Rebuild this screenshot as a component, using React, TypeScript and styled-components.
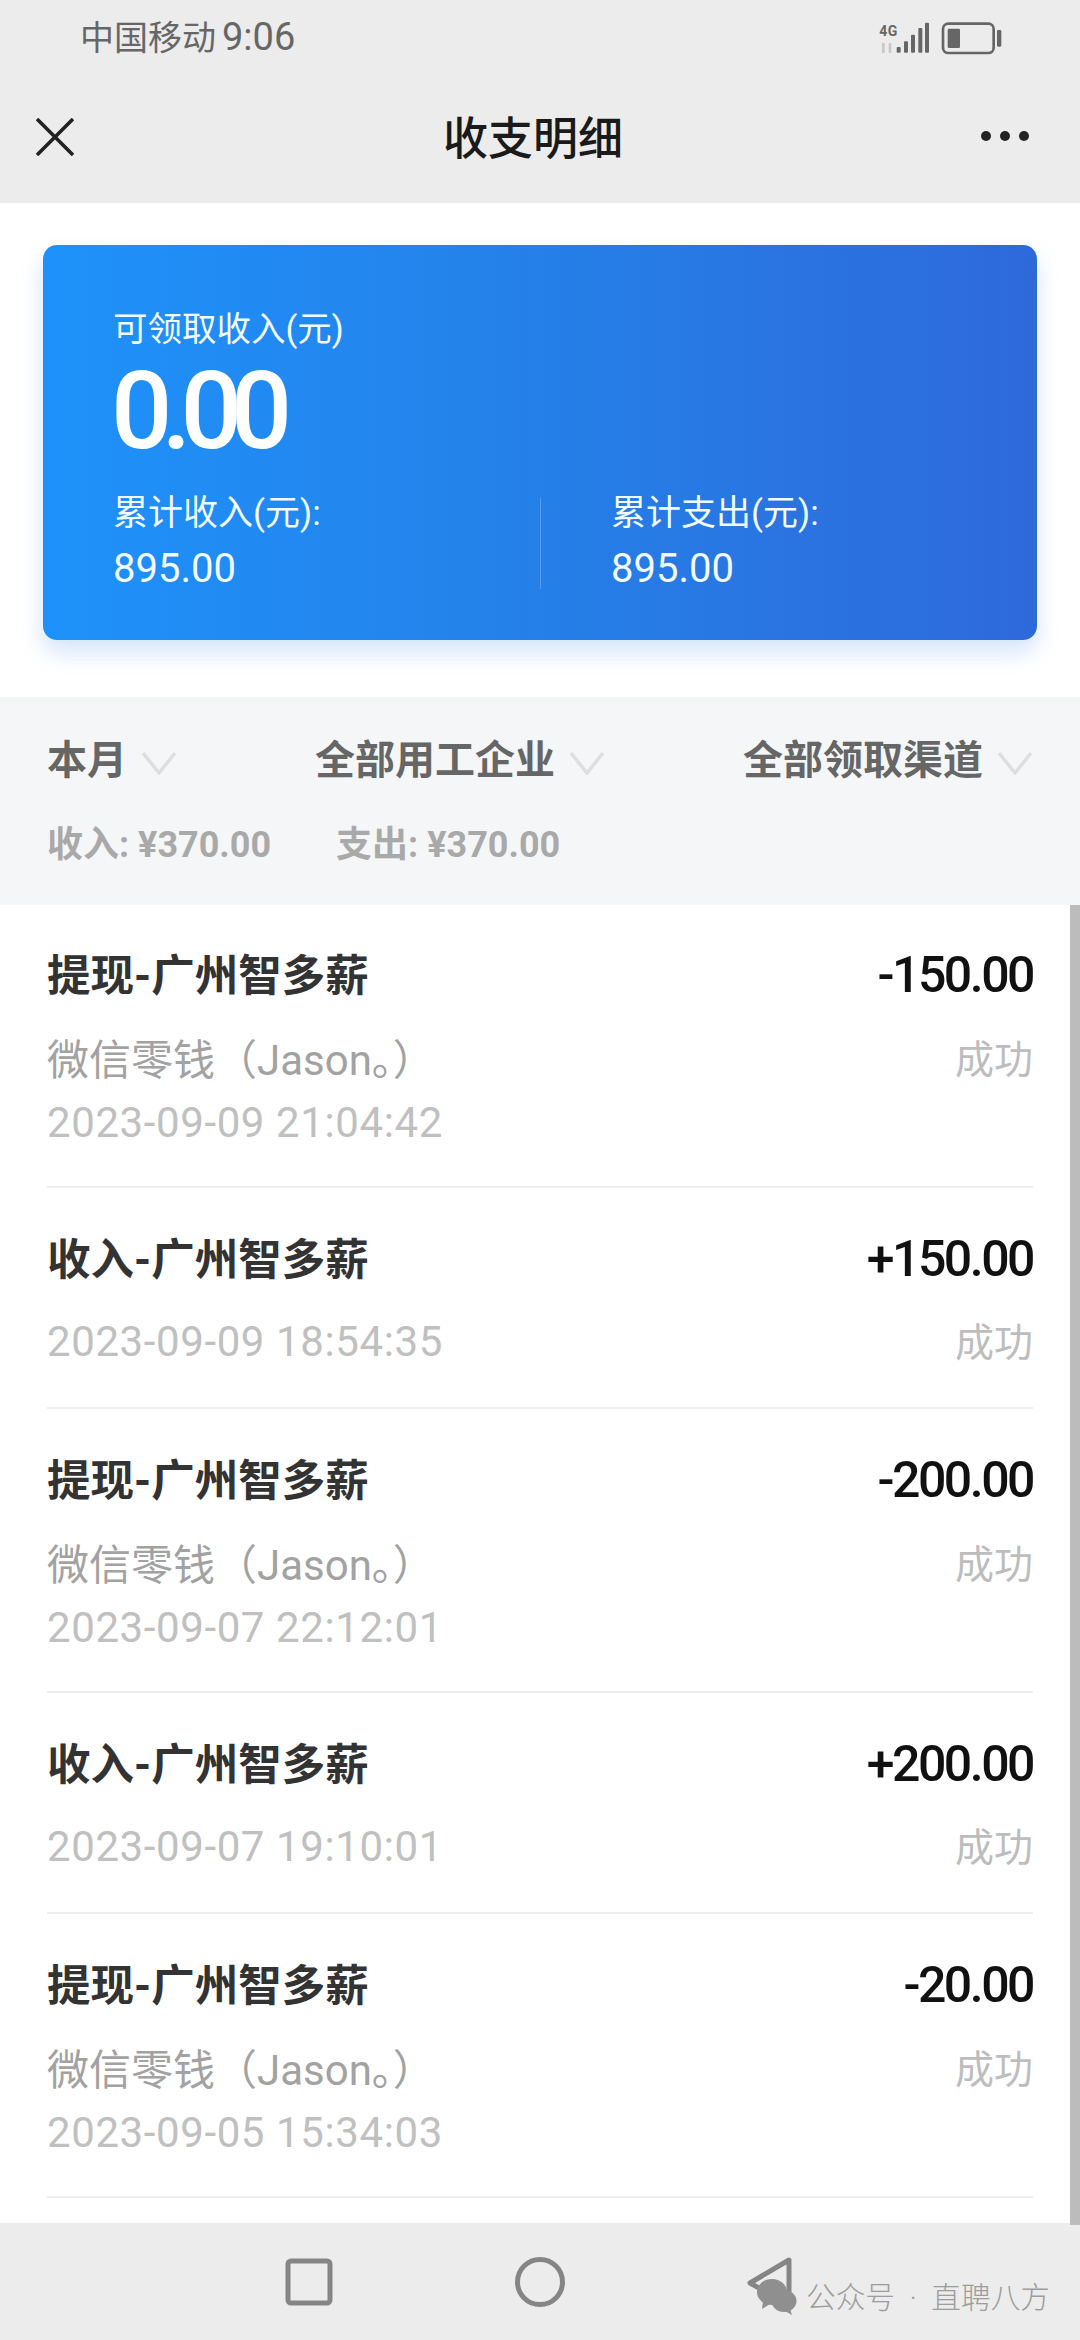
import React from "react";
import styled, { createGlobalStyle } from "styled-components";

const Global = createGlobalStyle`
  html, body { margin: 0; padding: 0; background: #fff; }
  * { box-sizing: border-box; }
  body { font-family: Roboto, "Noto Sans CJK SC", sans-serif; }
`;

const Page = styled.div`
  position: relative;
  width: 1080px;
  height: 2340px;
  overflow: hidden;
  display: flex;
  flex-direction: column;
  background: #fff;
`;

const Header = styled.header`
  height: 203px;
  flex: none;
  background: #ececec;
  display: flex;
  flex-direction: column;
`;

const StatusBar = styled.div`
  height: 74px;
  padding: 0 0 0 80px;
  display: flex;
  align-items: center;
  justify-content: space-between;
`;

const Carrier = styled.span`
  font-size: 34px;
  color: #666;
  line-height: 74px;
  white-space: nowrap;
`;

const Clock = styled.span`
  font-size: 38px;
  margin-left: 6px;
`;

const StatusIcons = styled.svg`
  width: 200px;
  height: 70px;
  margin-right: 20px;
  flex: none;
`;

const NavBar = styled.div`
  flex: 1;
  display: grid;
  grid-template-columns: 1fr auto 1fr;
  align-items: center;
  padding: 0 50px 0 36px;
`;

const CloseIcon = styled.svg`
  width: 38px;
  height: 38px;
  display: block;
  margin-bottom: 4px;
`;

const Title = styled.h1`
  margin: 0;
  font-size: 45px;
  font-weight: 500;
  color: #1a1a1a;
  line-height: 60px;
  position: relative;
  top: 1px;
`;

const MoreIcon = styled.svg`
  width: 50px;
  height: 12px;
  justify-self: end;
  display: block;
  margin-bottom: 6px;
`;

const CardWrap = styled.div`
  flex: none;
  height: 494px;
  padding: 42px 43px 0;
`;

const Card = styled.section`
  height: 395px;
  border-radius: 14px;
  padding: 55px 0 0 0;
  color: #f2fbff;
  background: linear-gradient(90deg, #1e92fa 0%, #2482ea 45%, #2e69da 100%);
  box-shadow: 0 12px 22px rgba(60, 130, 235, 0.22);
`;

const CardLabel = styled.div`
  font-size: 34.5px;
  line-height: 58px;
  margin-left: 70px;
  white-space: nowrap;
`;

const Balance = styled.div`
  font-size: 108px;
  line-height: 86px;
  margin: 10px 0 0 68px;
  font-weight: 500;
  letter-spacing: -11px;
  color: #fff;
`;

const Stats = styled.div`
  display: grid;
  grid-template-columns: 1fr 1fr;
  margin-top: 44px;
`;

const Stat = styled.div<{ $divided?: boolean }>`
  padding-left: 70px;
  height: 91px;
  border-left: ${(p) => (p.$divided ? "1px solid rgba(255,255,255,0.22)" : "none")};
`;

const StatLabel = styled.div`
  font-size: 35px;
  line-height: 34px;
  margin-top: -1px;
  white-space: nowrap;
`;

const StatValue = styled.div`
  font-size: 40px;
  line-height: 46px;
  margin-top: 15px;
`;

const FilterPanel = styled.section`
  flex: none;
  height: 208px;
  background: #f5f6f8;
  padding: 38px 47px 0;
`;

const Filters = styled.div`
  display: flex;
  justify-content: space-between;
  height: 52px;
  align-items: center;
`;

const Filter = styled.div`
  display: flex;
  align-items: center;
  gap: 14px;
`;

const FilterText = styled.span`
  font-size: 40px;
  font-weight: 700;
  color: #666;
  line-height: 52px;
  white-space: nowrap;
`;

const Chevron = styled.svg`
  width: 36px;
  height: 24px;
  display: block;
  margin-top: 4px;
`;

const Totals = styled.div`
  display: flex;
  gap: 65px;
  margin-top: 33px;
`;

const Total = styled.span`
  font-size: 36px;
  font-weight: 700;
  line-height: 50px;
  color: #a9a9a9;
  white-space: nowrap;
`;

const List = styled.main`
  flex: 1;
  padding: 0 47px;
  overflow: hidden;
`;

const Row = styled.article<{ $first?: boolean }>`
  padding: ${(p) => (p.$first ? "43px" : "44px")} 0 33px;
  border-bottom: 2px solid #eeeeee;
`;

const RowLine = styled.div`
  display: flex;
  justify-content: space-between;
  align-items: center;
`;

const RowTitle = styled.h2`
  margin: 0;
  font-size: 43.5px;
  font-weight: 700;
  line-height: 58px;
  color: #333;
`;

const Amount = styled.span`
  font-size: 50px;
  line-height: 58px;
  letter-spacing: -2.5px;
  color: #111;
  margin-top: -4px;
  font-weight: 500;
`;

const MetaGroup = styled.div`
  margin-top: 19px;
`;

const MetaLine = styled(RowLine)<{ $single?: boolean; $second?: boolean }>`
  height: ${(p) => (p.$single ? "65px" : "62px")};
  margin-top: ${(p) => (p.$second ? "4px" : "0")};
`;

const Channel = styled.span`
  font-size: 42px;
  color: #a2a2a2;
`;

const DateText = styled.span`
  font-size: 42px;
  color: #c0c0c0;
  letter-spacing: 0.6px;
`;

const Status = styled.span<{ $raised?: boolean }>`
  font-size: 39px;
  color: #bdbdbd;
  margin-top: ${(p) => (p.$raised ? "-5px" : "0")};
`;

const Scrollbar = styled.div`
  position: absolute;
  right: 0;
  top: 905px;
  width: 10px;
  height: 1320px;
  background: #bcbcbc;
`;

const BottomBar = styled.nav`
  flex: none;
  height: 117px;
  background: #ececec;
  display: flex;
  justify-content: center;
  align-items: flex-start;
  padding-top: 30px;
`;

const NavSlot = styled.div`
  width: 231px;
  display: flex;
  justify-content: center;
`;

const NavIcon = styled.svg`
  width: 60px;
  height: 60px;
  display: block;
  fill: none;
  stroke: #858585;
  stroke-width: 5;
  stroke-linejoin: round;
`;

const Watermark = styled.div`
  position: absolute;
  left: 757px;
  top: 2278px;
  display: flex;
  align-items: center;
  gap: 9px;
`;

const WatermarkIcon = styled.svg`
  width: 40px;
  height: 36px;
  display: block;
`;

const WatermarkText = styled.span`
  font-size: 29.7px;
  line-height: 36px;
  color: #9c9c9c;
  font-weight: 300;
  margin-top: 2px;
  white-space: pre;
`;

type Item = { title: string; amount: string; channel?: boolean; date: string };

const items: Item[] = [
  { title: "提现-广州智多薪", amount: "-150.00", channel: true, date: "2023-09-09 21:04:42" },
  { title: "收入-广州智多薪", amount: "+150.00", date: "2023-09-09 18:54:35" },
  { title: "提现-广州智多薪", amount: "-200.00", channel: true, date: "2023-09-07 22:12:01" },
  { title: "收入-广州智多薪", amount: "+200.00", date: "2023-09-07 19:10:01" },
  { title: "提现-广州智多薪", amount: "-20.00", channel: true, date: "2023-09-05 15:34:03" },
];

const FilterItem = ({ label }: { label: string }) => (
  <Filter>
    <FilterText>{label}</FilterText>
    <Chevron viewBox="0 0 36 24" fill="none" stroke="#dedede" strokeWidth="3.5">
      <path d="M2 2 L18 22 L34 2" />
    </Chevron>
  </Filter>
);

export default function App() {
  return (
    <Page>
      <Global />
      <Header>
        <StatusBar>
          <Carrier>
            中国移动<Clock>9:06</Clock>
          </Carrier>
          <StatusIcons viewBox="0 0 600 210">
            <text x="58" y="102" fontFamily="Roboto" fontWeight="700" fontSize="42" fill="#666" textLength="54">
              4G
            </text>
            <path d="M70 124v28M90 124v28" stroke="#c8c8c8" strokeWidth="8" />
            <g fill="#666">
              <rect x="110" y="135" width="12" height="17" rx="3" />
              <rect x="132" y="118" width="12" height="34" rx="3" />
              <rect x="153" y="98" width="12" height="54" rx="3" />
              <rect x="175" y="78" width="12" height="74" rx="3" />
              <rect x="195" y="62" width="12" height="90" rx="3" />
              <rect x="263" y="80" width="37" height="58" rx="4" />
              <rect x="411" y="84" width="13" height="50" rx="4" />
            </g>
            <rect x="249" y="65" width="152" height="88" rx="16" fill="none" stroke="#666" strokeWidth="8" />
          </StatusIcons>
        </StatusBar>
        <NavBar>
          <CloseIcon viewBox="0 0 38 38" fill="none" stroke="#222" strokeWidth="3.6">
            <path d="M1 1 L37 37 M37 1 L1 37" />
          </CloseIcon>
          <Title>收支明细</Title>
          <MoreIcon viewBox="0 0 50 12" fill="#222">
            <circle cx="6" cy="6" r="5" />
            <circle cx="25" cy="6" r="5" />
            <circle cx="44" cy="6" r="5" />
          </MoreIcon>
        </NavBar>
      </Header>

      <CardWrap>
        <Card>
          <CardLabel>可领取收入(元)</CardLabel>
          <Balance>0.00</Balance>
          <Stats>
            <Stat>
              <StatLabel>累计收入(元):</StatLabel>
              <StatValue>895.00</StatValue>
            </Stat>
            <Stat $divided>
              <StatLabel>累计支出(元):</StatLabel>
              <StatValue>895.00</StatValue>
            </Stat>
          </Stats>
        </Card>
      </CardWrap>

      <FilterPanel>
        <Filters>
          <FilterItem label="本月" />
          <FilterItem label="全部用工企业" />
          <FilterItem label="全部领取渠道" />
        </Filters>
        <Totals>
          <Total>收入: ¥370.00</Total>
          <Total>支出: ¥370.00</Total>
        </Totals>
      </FilterPanel>

      <List>
        {items.map((item, i) => (
          <Row key={item.date} $first={i === 0}>
            <RowLine>
              <RowTitle>{item.title}</RowTitle>
              <Amount>{item.amount}</Amount>
            </RowLine>
            <MetaGroup>
              {item.channel ? (
                <>
                  <MetaLine>
                    <Channel>微信零钱（Jason。）</Channel>
                    <Status>成功</Status>
                  </MetaLine>
                  <MetaLine $second>
                    <DateText>{item.date}</DateText>
                  </MetaLine>
                </>
              ) : (
                <MetaLine $single>
                  <DateText>{item.date}</DateText>
                  <Status $raised>成功</Status>
                </MetaLine>
              )}
            </MetaGroup>
          </Row>
        ))}
      </List>

      <Scrollbar />

      <BottomBar>
        <NavSlot>
          <NavIcon viewBox="0 0 60 60">
            <rect x="9" y="8" width="42" height="42" rx="3" />
          </NavIcon>
        </NavSlot>
        <NavSlot>
          <NavIcon viewBox="0 0 60 60">
            <circle cx="30" cy="29" r="22.5" />
          </NavIcon>
        </NavSlot>
        <NavSlot>
          <NavIcon viewBox="0 0 60 60">
            <path d="M48 7 L9 30 L48 52 Z" />
          </NavIcon>
        </NavSlot>
      </BottomBar>

      <Watermark>
        <WatermarkIcon viewBox="0 0 40 36" fill="#8f8f8f">
          <ellipse cx="15" cy="13" rx="15" ry="13" />
          <path d="M6 22 L5 30 L13 25 Z" />
          <ellipse cx="27" cy="22" rx="12.5" ry="11" />
          <path d="M33 30 L35 36 L28 32 Z" />
        </WatermarkIcon>
        <WatermarkText>{"公众号  ·  直聘八方"}</WatermarkText>
      </Watermark>
    </Page>
  );
}
